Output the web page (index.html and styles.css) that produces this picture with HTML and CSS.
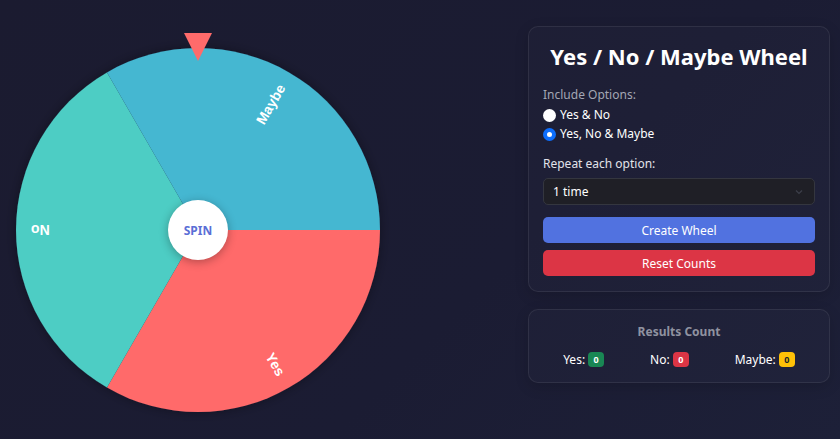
FILE: index.html
```html
<!DOCTYPE html>
<html>
<head>
<meta charset="utf-8">
<link rel="stylesheet" href="styles.css">
</head>
<body>
<div class="page">
  <div class="wheel-area">
    <div class="wheel-wrap">
      <svg class="wheel" width="364" height="380" viewBox="0 0 364 380">
        <defs>
          <filter id="sh" x="-10%" y="-10%" width="120%" height="120%">
            <feDropShadow dx="0" dy="0" stdDeviation="6" flood-color="#000" flood-opacity="0.35"/>
          </filter>
        </defs>
        <g filter="url(#sh)">
          <path d="M182,197 L364,197 A182,182 0 0 1 91,354.6 Z" fill="#ff6b6b"/>
          <path d="M182,197 L91,354.6 A182,182 0 0 1 91,39.4 Z" fill="#4ecdc4"/>
          <path d="M182,197 L91,39.4 A182,182 0 0 1 364,197 Z" fill="#45b7d1"/>
        </g>
        <g class="labels">
          <text transform="translate(182,197) rotate(60)" x="167" y="0">Yes</text>
          <text transform="translate(182,197) rotate(180)" x="167" y="0">No</text>
          <text transform="translate(182,197) rotate(300)" x="167" y="0">Maybe</text>
        </g>
        <polygon points="168,0 196,0 182,28" fill="#ff6b6b"/>
      </svg>
      <div class="spin">SPIN</div>
    </div>
  </div>
  <div class="side">
    <div class="card controls">
      <h1 class="title">Yes / No / Maybe Wheel</h1>
      <div class="label muted">Include Options:</div>
      <label class="radio"><span class="dot"></span>Yes &amp; No</label>
      <label class="radio"><span class="dot checked"></span>Yes, No &amp; Maybe</label>
      <div class="label repeat">Repeat each option:</div>
      <div class="select">
        <span>1 time</span>
        <svg width="10" height="10" viewBox="0 0 10 10"><path d="M2 3.5 L5 6.5 L8 3.5" fill="none" stroke="#3d3f4a" stroke-width="1.2"/></svg>
      </div>
      <div class="btn blue">Create Wheel</div>
      <div class="btn red">Reset Counts</div>
    </div>
    <div class="card results">
      <div class="res-title">Results Count</div>
      <div class="res-row">
        <span class="res-item">Yes: <span class="badge green">0</span></span>
        <span class="res-item">No: <span class="badge redb">0</span></span>
        <span class="res-item">Maybe: <span class="badge yellow">0</span></span>
      </div>
    </div>
  </div>
</div>
</body>
</html>
```
FILE: styles.css
```css
html, body {
  margin: 0;
  padding: 0;
  height: 100%;
}
body {
  background: linear-gradient(135deg, #1b1b30 0%, #1b1c33 60%, #1d2038 100%);
  font-family: "Noto Sans", "Open Sans", sans-serif;
  color: #fff;
  overflow: hidden;
}
.page {
  display: flex;
  justify-content: space-between;
  padding: 0 10px 0 16px;
  height: 439px;
  box-sizing: border-box;
}
.wheel-area {
  padding-top: 33px;
}
.wheel-wrap {
  position: relative;
  width: 364px;
  height: 380px;
}
.wheel {
  display: block;
  overflow: visible;
}
.labels text {
  fill: #fff;
  font-family: "Liberation Sans", Arial, sans-serif;
  font-weight: bold;
  font-size: 14px;
  text-anchor: end;
  dominant-baseline: central;
}
.spin {
  position: absolute;
  left: 152px;
  top: 167px;
  width: 60px;
  height: 60px;
  border-radius: 50%;
  background: #fff;
  box-shadow: 0 2px 10px rgba(0,0,0,0.3);
  display: flex;
  align-items: center;
  justify-content: center;
  color: #5b6fd6;
  font-weight: 700;
  font-size: 12px;
}
.side {
  width: 302px;
  padding-top: 26px;
  display: flex;
  flex-direction: column;
  gap: 17px;
}
.card {
  background: rgba(255,255,255,0.015);
  border: 1px solid rgba(255,255,255,0.08);
  border-radius: 10px;
  box-sizing: border-box;
  box-shadow: 0 4px 14px rgba(0,0,0,0.15);
}
.controls {
  height: 266px;
  padding: 14px 14px 0 14px;
  display: flex;
  flex-direction: column;
}
.title {
  margin: 0;
  text-align: center;
  font-size: 22px;
  font-weight: 700;
  line-height: 30px;
}
.label {
  font-size: 12px;
  line-height: 16px;
}
.muted {
  color: #a3a6b4;
  margin-top: 16px;
}
.radio {
  display: flex;
  align-items: center;
  gap: 4px;
  font-size: 12px;
  line-height: 16px;
  margin-top: 4px;
  color: #fff;
}
.radio + .radio { margin-top: 3px; }
.dot {
  width: 13px;
  height: 13px;
  border-radius: 50%;
  background: #fff;
  box-sizing: border-box;
}
.dot.checked {
  background: #fff;
  border: 4px solid #0d6efd;
}
.repeat {
  color: #e2e3ea;
  margin-top: 14px;
}
.select {
  margin-top: 6px;
  height: 27px;
  box-sizing: border-box;
  background: #1f1f26;
  border: 1px solid #34363f;
  border-radius: 5px;
  display: flex;
  align-items: center;
  justify-content: space-between;
  padding: 0 10px 0 9px;
  font-size: 12px;
}
.btn {
  height: 26px;
  border-radius: 5px;
  display: flex;
  align-items: center;
  justify-content: center;
  font-size: 12px;
  color: #fff;
}
.blue {
  margin-top: 12px;
  background: #5172e0;
}
.red {
  margin-top: 7px;
  background: #dc3545;
}
.results {
  height: 74px;
  display: flex;
  flex-direction: column;
  align-items: center;
  padding-top: 14px;
}
.res-title {
  color: #8f92a0;
  font-size: 12px;
  font-weight: 700;
  line-height: 16px;
}
.res-row {
  margin-top: 11px;
  display: flex;
  justify-content: center;
  gap: 46px;
  font-size: 12px;
}
.res-item {
  display: flex;
  align-items: center;
  gap: 3px;
}
.badge {
  display: inline-flex;
  align-items: center;
  justify-content: center;
  width: 16px;
  height: 15px;
  border-radius: 4px;
  font-size: 9px;
  font-weight: 700;
  color: #fff;
}
.green { background: #198754; }
.redb { background: #dc3545; }
.yellow { background: #ffc107; color: #212529; }
```
